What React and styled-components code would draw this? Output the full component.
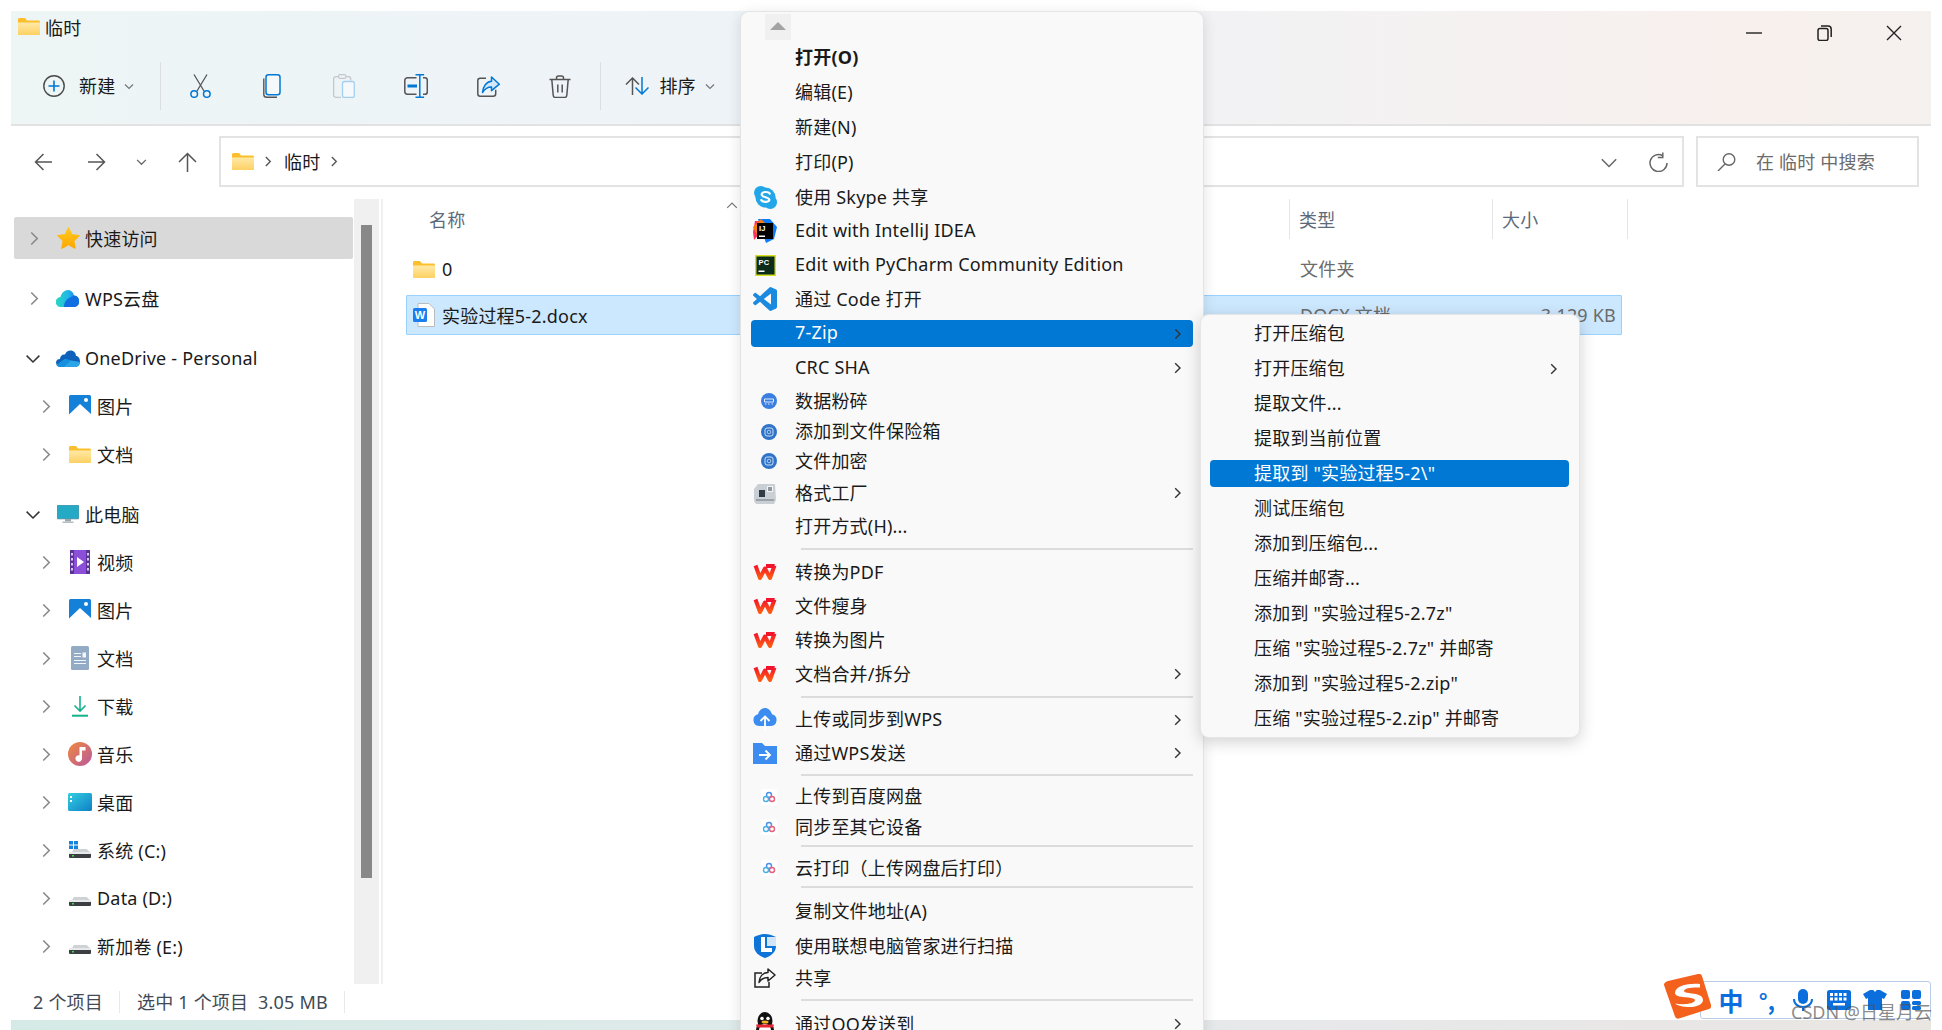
import React from 'react';
import styled, { createGlobalStyle } from 'styled-components';

const GlobalStyle = createGlobalStyle`
  html, body {
    margin: 0;
    padding: 0;
    background: #fff;
    font-family: "Noto Sans", "Noto Sans CJK SC", sans-serif;
    font-size: 18px;
    letter-spacing: 0.2px;
    color: #1a1a1a;
  }
  * { box-sizing: border-box; }
`;

const Page = styled.div`
  position: relative;
  width: 1942px;
  height: 1030px;
  overflow: hidden;
  background: #fff;
  padding: 11px 0 0 11px;
`;

const Win = styled.div`
  width: 1920px;
  height: 1019px;
  display: flex;
  flex-direction: column;
`;

const Header = styled.div`
  height: 115px;
  flex: none;
  border-bottom: 2px solid #e2e2e2;
  background: linear-gradient(90deg, #edf5f5 0%, #eef3f8 40%, #f3f2f3 68%, #f8f0ed 90%, #f5f1ee 100%);
`;

const TitleRow = styled.div`
  height: 40px;
  display: flex;
  align-items: flex-start;
  padding: 7px 2px 0 7px;
`;

const TitleText = styled.div`
  margin-left: 5px;
  line-height: 20px;
`;

const WinControls = styled.div`
  margin-left: auto;
  display: flex;
`;

const WinButton = styled.div`
  width: 70px;
  height: 30px;
  display: flex;
  align-items: center;
  justify-content: center;
`;

const Toolbar = styled.div`
  height: 70px;
  display: flex;
  align-items: center;
  padding-left: 32px;
`;

const ToolLabel = styled.span`
  margin-left: ${p => p.$ml}px;
  padding-bottom: 2px;
  white-space: nowrap;
`;

const TinyDown = styled.span`
  margin-left: ${p => p.$ml}px;
  display: flex;
`;

const ToolDivider = styled.div`
  width: 1px;
  height: 48px;
  background: #dcdfe2;
  margin-left: ${p => p.$ml}px;
  margin-right: ${p => p.$mr}px;
`;

const ToolButton = styled.div`
  width: 72px;
  height: 48px;
  display: flex;
  align-items: center;
  justify-content: center;
`;

const SortIcon = styled.span`
  margin-left: 24px;
  display: flex;
`;

const NavRow = styled.div`
  height: 73px;
  flex: none;
  padding-top: 10px;
  display: flex;
  align-items: flex-start;
  padding-left: 5px;
`;

const NavButton = styled.div`
  width: ${p => p.$w}px;
  margin-left: ${p => p.$ml || 0}px;
  height: 51px;
  display: flex;
  align-items: center;
  justify-content: center;
`;

const AddressBox = styled.div`
  width: 1465px;
  height: 51px;
  margin-left: 5px;
  border: 2px solid #e3e3e3;
  display: flex;
  align-items: center;
  padding: 0 14px 0 11px;
`;

const Crumb = styled.span`
  margin-left: ${p => p.$ml}px;
  padding-bottom: ${p => p.$pb || 0}px;
  display: flex;
`;

const AddressEnd = styled.div`
  margin-left: auto;
  display: flex;
  align-items: center;
  gap: 31px;
`;

const SearchBox = styled.div`
  width: 223px;
  height: 51px;
  margin-left: 12px;
  border: 2px solid #e3e3e3;
  display: flex;
  align-items: center;
  padding-left: 19px;
  color: #6b6b6b;
`;

const SearchText = styled.span`
  margin-left: 20px;
  padding-bottom: 1px;
  white-space: pre;
`;

const Content = styled.div`
  height: 785px;
  flex: none;
  display: flex;
`;

const Sidebar = styled.div`
  width: 343px;
  flex: none;
  padding: 18px 0 0 3px;
`;

const Group = styled.div`
  display: flex;
  flex-direction: column;
  gap: 6px;
  margin-bottom: 18px;
`;

const TreeRow = styled.div`
  height: 42px;
  width: 339px;
  display: flex;
  align-items: center;
  border-radius: 2px;
  padding-left: ${p => (p.$child ? 23 : 11)}px;
  background: ${p => (p.$selected ? '#d9d9d9' : 'transparent')};
`;

const TreeArrow = styled.span`
  width: 16px;
  display: flex;
  justify-content: center;
  flex: none;
`;

const TreeIcon = styled.span`
  display: flex;
  justify-content: center;
  flex: none;
  width: 24px;
  margin-left: 15px;
  margin-right: 5px;
`;

const TreeLabel = styled.span`
  padding-bottom: 1px;
`;

const ScrollTrack = styled.div`
  width: 25px;
  flex: none;
  background: #f0f0f0;
  padding: 26px 7px 0;
`;

const ScrollThumb = styled.div`
  height: 653px;
  background: #888;
`;

const ListPane = styled.div`
  margin-left: 2px;
  border-left: 2px solid #f0f0f0;
  flex: 1;
`;

const ColumnHead = styled.div`
  height: 40px;
  display: flex;
  color: #5c6b7a;
`;

const HeadCell = styled.div`
  width: ${p => p.$w}px;
  padding-left: ${p => p.$pl}px;
  border-right: 1px solid #e5e5e5;
  display: flex;
  align-items: center;
`;

const SortCaret = styled.span`
  align-self: flex-start;
  margin: 0 0 0 261px;
  display: flex;
  padding-top: 1px;
`;

const FileRow = styled.div`
  width: 1216px;
  height: 40px;
  margin-left: 23px;
  margin-top: ${p => p.$mt}px;
  display: grid;
  grid-template-columns: 884px 203px 1fr;
  align-items: center;
  border: 1px solid ${p => (p.$selected ? '#99d1ff' : 'transparent')};
  border-radius: 1px;
  background: ${p => (p.$selected ? '#cce8ff' : 'transparent')};
`;

const FileName = styled.div`
  display: flex;
  align-items: center;
  padding-left: 6px;
`;

const FileNameText = styled.span`
  margin-left: 7px;
`;

const FileMeta = styled.div`
  color: #6b6b6b;
  padding: 0 0 2px 9px;
`;

const FileSize = styled.div`
  color: #6b6b6b;
  text-align: right;
  padding-right: 5px;
`;

const StatusBar = styled.div`
  height: 36px;
  flex: none;
  display: flex;
  align-items: center;
  padding-left: 22px;
  font-size: 18px;
  color: #3f4a55;
`;

const StatusText = styled.span`
  white-space: pre;
  padding-bottom: 2px;
`;

const StatusDivider = styled.span`
  width: 1px;
  height: 22px;
  background: #e8e8e8;
  margin: 0 ${p => p.$mr}px 0 ${p => p.$ml}px;
`;

const BottomStrip = styled.div`
  height: 10px;
  flex: none;
  background: linear-gradient(90deg, #d5eae6 0%, #dfeaea 40%, #e8e8ea 70%, #e9e6e2 100%);
`;

const Menu = styled.div`
  position: absolute;
  left: 740px;
  top: 11px;
  width: 464px;
  height: 1040px;
  background: #f9f9f9;
  border: 1px solid #e4e4e4;
  border-radius: 9px;
  box-shadow: 0 3px 14px rgba(0, 0, 0, 0.12);
  padding: 2px 10px 0;
`;

const ScrollUp = styled.div`
  width: 26px;
  height: 26px;
  margin-left: 14px;
  background: #f0f0f0;
  display: flex;
  align-items: center;
  justify-content: center;
`;

const UpTriangle = styled.span`
  width: 0;
  height: 0;
  border-left: 8px solid transparent;
  border-right: 8px solid transparent;
  border-bottom: 8px solid #a3a3a3;
  margin-top: -3px;
`;

const MenuRow = styled.div`
  height: ${p => p.$h || 35}px;
  display: flex;
  align-items: center;
`;

const MenuRowInner = styled.div`
  flex: 1;
  height: 27px;
  display: flex;
  align-items: center;
  border-radius: 4px;
  padding-right: 10px;
  background: ${p => (p.$active ? '#0078d4' : 'transparent')};
`;

const MenuIconSlot = styled.span`
  width: 28px;
  margin-right: 16px;
  flex: none;
  display: flex;
  justify-content: center;
  align-items: center;
  padding-left: ${p => p.$shift || 0}px;
`;

const MenuLabel = styled.span`
  white-space: pre;
  padding-bottom: 3px;
  font-weight: ${p => (p.$bold ? 700 : 400)};
  color: ${p => (p.$active ? '#fff' : '#1a1a1a')};
`;

const MenuArrow = styled.span`
  margin-left: auto;
  display: flex;
`;

const MenuSep = styled.div`
  height: 2px;
  background: #dcdcdc;
  margin: ${p => p.$top}px 0 ${p => p.$bottom}px 50px;
`;

const SubMenu = styled.div`
  position: absolute;
  left: 1200px;
  top: 314px;
  width: 380px;
  height: 424px;
  background: #f9f9f9;
  border: 1px solid #e6e6e6;
  border-radius: 9px;
  box-shadow: 0 4px 16px rgba(0, 0, 0, 0.18);
  padding: 1px 10px 0 9px;
`;

const SubLabelSlot = styled.span`
  width: 44px;
  flex: none;
`;

const ImeDock = styled.div`
  position: absolute;
  left: 1664px;
  top: 974px;
  display: flex;
  align-items: flex-start;
`;

const ImeBar = styled.div`
  width: 231px;
  height: 38px;
  margin: 7px 0 0 -11px;
  background: #fff;
  border: 1px solid #b9cde8;
  border-radius: 3px;
  display: flex;
  align-items: center;
  padding-left: 12px;
`;

const ImeLogo = styled.span`
  position: relative;
  z-index: 1;
  display: flex;
`;

const ImeSlot = styled.span`
  width: 36px;
  display: flex;
  justify-content: center;
  align-items: center;
  color: #0a6fdc;
  font-size: ${p => p.$size || 22}px;
  font-weight: 700;
  line-height: 1;
  font-family: "Noto Sans CJK SC", sans-serif;
`;

const Watermark = styled.div`
  position: absolute;
  left: 1791px;
  top: 1000px;
  color: rgba(80, 80, 80, 0.68);
  font-size: 18px;
  line-height: 24px;
  white-space: pre;
  letter-spacing: 0;
`;

/* ---- small drawings ---- */

const FolderIcon = ({ w = 22, h = 17 }) => (
  <svg width={w} height={h} viewBox="0 0 22 17">
    <defs>
      <linearGradient id="fld" x1="0" y1="0" x2="0" y2="1">
        <stop offset="0" stopColor="#ffe9a6" />
        <stop offset="1" stopColor="#fdd163" />
      </linearGradient>
    </defs>
    <path d="M0 1.500C0 .7.700 0 1.500 0H7l2 2.500h11.500c.8 0 1.500.7 1.500 1.500v11.500c0 .8-.7 1.500-1.500 1.500h-19C.7 17 0 16.300 0 15.500z" fill="#fbbf2d" />
    <path d="M0 4.500h22v11c0 .8-.7 1.500-1.500 1.500h-19C.7 17 0 16.300 0 15.500z" fill="url(#fld)" />
  </svg>
);

const Chevron = ({ dir = 'right', size = 10, color = '#777', sw = 1.5 }) => {
  const d = {
    right: 'M3.5 1 L7.5 5 L3.5 9',
    down: 'M1 3.5 L5 7.5 L9 3.5',
    up: 'M1 6.5 L5 2.5 L9 6.5',
  }[dir];
  return (
    <svg width={size} height={size} viewBox="0 0 10 10">
      <path d={d} fill="none" stroke={color} strokeWidth={sw * (10 / size)} />
    </svg>
  );
};

const TreeChevron = ({ open }) =>
  open ? <Chevron dir="down" size={16} color="#333" sw={1.5} /> : <Chevron size={15} color="#8a8a8a" sw={1.6} />;

const Minimize = () => (
  <svg width="16" height="16" viewBox="0 0 16 16"><path d="M0 8h16" stroke="#222" strokeWidth="1.4" /></svg>
);
const Restore = () => (
  <svg width="15" height="16" viewBox="0 0 15 16" fill="none" stroke="#222" strokeWidth="1.500">
    <rect x="1" y="3.500" width="10" height="12" rx="2" />
    <path d="M4 1h7c1.800 0 3.200 1.400 3.200 3.200V12" />
  </svg>
);
const CloseX = () => (
  <svg width="16" height="16" viewBox="0 0 16 16"><path d="M1 1l14 14M15 1L1 15" stroke="#222" strokeWidth="1.4" /></svg>
);

const NewIcon = () => (
  <svg width="22" height="22" viewBox="0 0 22 22" fill="none">
    <circle cx="11" cy="11" r="10.200" stroke="#4a4a4a" strokeWidth="1.400" />
    <path d="M11 5.500v11M5.500 11h11" stroke="#0078d4" strokeWidth="1.600" />
  </svg>
);
const CutIcon = () => (
  <svg width="21" height="24" viewBox="0 0 21 24" fill="none">
    <path d="M4 .5l10 16.500M17 .5L7 17" stroke="#555" strokeWidth="1.300" />
    <circle cx="4.200" cy="20" r="3.300" stroke="#0078d4" strokeWidth="1.500" />
    <circle cx="16.800" cy="20" r="3.300" stroke="#0078d4" strokeWidth="1.500" />
  </svg>
);
const CopyIcon = () => (
  <svg width="18" height="24" viewBox="0 0 18 24" fill="none">
    <path d="M.8 4.500V20.500c0 1.700 1.300 2.800 3 2.800H14" stroke="#555" strokeWidth="1.400" />
    <rect x="3" y=".8" width="14" height="20" rx="2.500" fill="#f6f9fc" stroke="#0078d4" strokeWidth="1.500" />
  </svg>
);
const PasteIcon = () => (
  <svg width="22" height="24" viewBox="0 0 22 24" fill="none">
    <path d="M8 23.300H3c-1.400 0-2.400-1-2.400-2.500V5c0-1.400 1-2.400 2.400-2.400h12.500c1.300 0 2.200 1 2.200 2.400v1.500" stroke="#c4c8cb" strokeWidth="1.300" />
    <rect x="5.500" y=".7" width="7.500" height="3.600" rx="1.500" fill="#eef3f8" stroke="#c4c8cb" strokeWidth="1.200" />
    <rect x="9.500" y="7.500" width="11.800" height="16" rx="2" fill="#f6f9fc" stroke="#a4d0ef" strokeWidth="1.300" />
  </svg>
);
const RenameIcon = () => (
  <svg width="24" height="24" viewBox="0 0 24 24" fill="none">
    <path d="M12.500 3.700H3.500C2 3.700.8 4.900.8 6.400v11.200c0 1.500 1.200 2.700 2.700 2.700h9M19 3.700h2c1.300 0 2.300 1.200 2.300 2.700v11.200c0 1.500-1 2.700-2.300 2.700h-2" stroke="#555" strokeWidth="1.500" />
    <path d="M15.800 .8v22.400M11.500 .8h8.600M11.500 23.200h8.600" stroke="#0078d4" strokeWidth="1.500" />
    <path d="M3.500 12h9.500" stroke="#0078d4" strokeWidth="3" />
  </svg>
);
const ShareIcon = () => (
  <svg width="23" height="21" viewBox="0 0 23 21" fill="none">
    <path d="M9 2.200H3.200C1.800 2.200.8 3.200.8 4.700v13c0 1.500 1 2.500 2.400 2.500h13c1.500 0 2.500-1 2.500-2.500v-4" stroke="#555" strokeWidth="1.500" />
    <path d="M14.500 1l7.800 7.200-7.800 6.500v-3.600C11 11 8 12.800 5.500 16.500 6 10.500 9.500 5.500 14.500 5.200z" fill="#d3e8fa" stroke="#0078d4" strokeWidth="1.500" strokeLinejoin="round" />
  </svg>
);
const TrashIcon = () => (
  <svg width="22" height="23" viewBox="0 0 22 23" fill="none" stroke="#555" strokeWidth="1.500">
    <path d="M.5 4.500h21M7.500 4.500V3c0-1.200 .8-2 2-2h3c1.200 0 2 .8 2 2v1.500" />
    <path d="M2.800 4.500l1.400 15.800c.1 1.500 1 2.200 2.300 2.200h9c1.300 0 2.200-.7 2.300-2.200l1.400-15.800" />
    <path d="M8.800 9.500v8M13.200 9.500v8" />
  </svg>
);
const SortArrows = () => (
  <svg width="24" height="18" viewBox="0 0 24 18" fill="none" strokeWidth="1.500">
    <path d="M7.500 18V1.200M1 7.500L7.500 1 14 7.500" stroke="#555" />
    <path d="M17 0v16.800M10.500 10.500L17 17l6.500-6.500" stroke="#0078d4" />
  </svg>
);
const NavArrow = ({ dir }) => {
  const props = {
    left: { w: 18, h: 18, d: 'M18 9H1.500M9.500 1L1.500 9l8 8' },
    right: { w: 18, h: 18, d: 'M0 9h16.500M8.500 1l8 8-8 8' },
    up: { w: 19, h: 20, d: 'M9.500 20V1.500M1 10l8.500-8.500L18 10' },
  }[dir];
  return (
    <svg width={props.w} height={props.h} viewBox={`0 0 ${props.w} ${props.h}`} fill="none">
      <path d={props.d} stroke="#555" strokeWidth="1.500" />
    </svg>
  );
};
const Refresh = () => (
  <svg width="19" height="20" viewBox="0 0 19 20" fill="none" stroke="#666" strokeWidth="1.500">
    <path d="M13.500 3.500A8.500 8.500 0 1 0 18 11" />
    <path d="M13.800 .5v5h-5" />
  </svg>
);
const SearchGlass = () => (
  <svg width="19" height="18" viewBox="0 0 19 18" fill="none" stroke="#666" strokeWidth="1.400">
    <circle cx="12" cy="6.500" r="5.800" />
    <path d="M8 11L1 18" />
  </svg>
);
const StarIcon = () => (
  <svg width="23" height="22" viewBox="0 0 24 23">
    <defs>
      <linearGradient id="star" x1="0" y1="0" x2="0" y2="1">
        <stop offset="0" stopColor="#ffc91f" />
        <stop offset="1" stopColor="#fda800" />
      </linearGradient>
    </defs>
    <path d="M12 1l3.300 7 7.700 1-5.600 5.300L18.800 22 12 18.200 5.200 22l1.400-7.700L1 9l7.700-1z" fill="url(#star)" stroke="url(#star)" strokeWidth="1.500" strokeLinejoin="round" />
  </svg>
);
const WpsCloud = () => (
  <svg width="24" height="17" viewBox="0 0 24 17">
    <defs>
      <linearGradient id="wpc" x1="0" y1="0" x2="1" y2="0">
        <stop offset="0" stopColor="#28d8c0" />
        <stop offset="0.55" stopColor="#22b4ea" />
        <stop offset="1" stopColor="#0e70e0" />
      </linearGradient>
    </defs>
    <path d="M5 17a5 5 0 0 1-.6-10C5.400 3 8.500 0 12 0c3 0 5.500 2.500 6 5.500A5.800 5.800 0 0 1 18 17z" fill="url(#wpc)" />
    <path d="M8 17c0-5 3-8.500 7-10 2-.8 3-1.500 3-1.500A5.800 5.800 0 0 1 18 17z" fill="#0f6fe0" />
  </svg>
);
const OneDriveIcon = () => (
  <svg width="24" height="17" viewBox="0 0 24 17">
    <path d="M4 9c0-3 2.500-5 5-4.500C10 2 12 .5 14.500 .5 18 .5 20 3 20 6c2.500 0 4 2.500 4 5.500C24 14.500 22 17 19 17H5c-3 0-5-2-5-4.500S2 9 4 9z" fill="#0e62bb" />
    <path d="M.5 15L9 9l6 1.500 9 1.500c0 3-2 5-5 5H5c-2 0-3.500-1-4.500-2z" fill="#2aa5e8" />
    <path d="M9 9l6 1.500-7 6.500H5c-2 0-3.500-1-4.500-2z" fill="#1490df" />
  </svg>
);
const PicturesIcon = () => (
  <svg width="22" height="22" viewBox="0 0 22 22">
    <rect width="22" height="22" rx="1.500" fill="#1580d8" />
    <path d="M0 19.500L11 9l11 10v3H0z" fill="#fff" />
    <circle cx="17" cy="5" r="2" fill="#fff" />
  </svg>
);
const MonitorIcon = () => (
  <svg width="22" height="18" viewBox="0 0 22 18">
    <rect width="22" height="14" rx="1" fill="#25aac6" stroke="#7d8c94" strokeWidth=".6" />
    <path d="M8 14h6v2.500H8z" fill="#9aa6ad" />
    <path d="M5.500 16.500h11V18h-11z" fill="#b6bec3" />
  </svg>
);
const VideoIcon = () => (
  <svg width="20" height="24" viewBox="0 0 20 24">
    <rect width="20" height="24" rx="1.500" fill="#8c4fd8" />
    <path d="M0 0h4v24H0zM16 0h4v24h-4z" fill="#5a3396" />
    <path d="M1 3h2v2.500H1zM1 8h2v2.500H1zM1 13h2v2.500H1zM1 18h2v2.500H1zM17 3h2v2.500h-2zM17 8h2v2.500h-2zM17 13h2v2.500h-2zM17 18h2v2.500h-2z" fill="#d9c3f4" />
    <path d="M7 7l7 5-7 5z" fill="#fff" />
  </svg>
);
const DocsIcon = () => (
  <svg width="18" height="24" viewBox="0 0 18 24">
    <rect width="18" height="24" rx="1.500" fill="#94abc6" />
    <path d="M3 7h7v1H3zM3 10h7v1H3zM3 14h12v1H3zM3 17h12v1H3z" fill="#f3f6f9" />
    <path d="M11.500 6.500h3.500v5h-3.500z" fill="#f3f6f9" />
  </svg>
);
const DownloadIcon = () => (
  <svg width="16" height="21" viewBox="0 0 16 21" fill="none" stroke="#16b18c" strokeWidth="1.600">
    <path d="M8 0v15M2.500 9.500L8 15l5.500-5.500" />
    <path d="M0 19.700h16" strokeWidth="2" />
  </svg>
);
const MusicIcon = () => (
  <svg width="24" height="24" viewBox="0 0 24 24">
    <defs>
      <linearGradient id="mus" x1="0" y1="0" x2="1" y2="1">
        <stop offset="0" stopColor="#f08a3c" />
        <stop offset="1" stopColor="#b9579e" />
      </linearGradient>
    </defs>
    <circle cx="12" cy="12" r="12" fill="url(#mus)" />
    <path d="M11.500 5h6v3.500h-3.500v8a3.300 3.300 0 1 1-2.500-3.200z" fill="#fff" />
  </svg>
);
const DesktopIcon = () => (
  <svg width="24" height="18" viewBox="0 0 24 18">
    <defs>
      <linearGradient id="dsk" x1="0" y1="0" x2="1" y2="1">
        <stop offset="0" stopColor="#33cfe0" />
        <stop offset="1" stopColor="#0f7fc6" />
      </linearGradient>
    </defs>
    <rect width="24" height="18" rx="1.500" fill="url(#dsk)" />
    <path d="M2 3h2v2H2zM2 7h2v2H2z" fill="#fff" />
  </svg>
);
const DriveIcon = ({ win }) => (
  <svg width="22" height="18" viewBox="0 0 22 18">
    {win && <path d="M0 0h4v3.500H0zM5 0h4v3.500H5zM0 4.500h4V8H0zM5 4.500h4V8H5z" fill="#1583dc" />}
    <path d="M3 11l2-3h12.500L21 11z" fill="#cfd2d4" />
    <rect y="11" width="22" height="6" rx="1" fill="#3b3f42" />
    <rect y="11" width="22" height="2" fill="#e8e9ea" />
    <rect x="3" y="14" width="2" height="1.500" fill="#3ede4a" />
  </svg>
);
const WordIcon = () => (
  <svg width="22" height="24" viewBox="0 0 22 24">
    <path d="M5 .5h11l5.500 5.500v17.500H5z" fill="#fff" stroke="#b8bcc0" />
    <rect y="5" width="14" height="14" rx="1.500" fill="#1a7ef0" />
    <text x="7" y="16" textAnchor="middle" fontSize="11" fontWeight="700" fill="#fff" fontFamily="Liberation Sans">W</text>
  </svg>
);
const SkypeIcon = () => (
  <svg width="23" height="23" viewBox="0 0 24 24">
    <circle cx="7" cy="7" r="7" fill="#22a6e8" />
    <circle cx="17" cy="17" r="7" fill="#22a6e8" />
    <circle cx="12" cy="12" r="10.500" fill="#22a6e8" />
    <path d="M16.500 8c-1-2-7.500-2.800-8.500.5-.8 3.500 7.500 3 8 5.800.3 2.700-6 3.300-8.500.3" fill="none" stroke="#fff" strokeWidth="2.200" strokeLinecap="round" />
  </svg>
);
const IdeaIcon = () => (
  <svg width="24" height="24" viewBox="0 0 24 24">
    <path d="M2 2h10l-3 10-8 9-1-8z" fill="#fe315d" />
    <path d="M5 0h12l7 8-3 12-8 4z" fill="#087cfa" />
    <path d="M0 8L8 0l6 6-8 14z" fill="#f97a12" />
    <rect x="4" y="4" width="16" height="16" fill="#000" />
    <text x="6" y="12" fontSize="7.500" fontWeight="700" fill="#fff" fontFamily="Liberation Sans">IJ</text>
    <path d="M6 16.500h6V18H6z" fill="#fff" />
  </svg>
);
const PyCharmIcon = () => (
  <svg width="21" height="21" viewBox="0 0 21 21">
    <rect width="21" height="21" fill="#d8e021" />
    <rect x="1.500" y="1.500" width="18" height="18" fill="#0c2c1c" />
    <text x="3.500" y="9.500" fontSize="7.500" fontWeight="700" fill="#fff" fontFamily="Liberation Sans">PC</text>
    <path d="M3.500 15.500h6V17h-6z" fill="#fff" />
  </svg>
);
const VsCodeIcon = () => (
  <svg width="24" height="24" viewBox="0 0 24 24">
    <path fill="#1a8ae0" d="M23.150 2.587L18.210.21a1.494 1.494 0 0 0-1.705.29l-9.460 8.630-4.120-3.128a.999.999 0 0 0-1.276.057L.327 7.261A1 1 0 0 0 .326 8.740L3.899 12 .326 15.260a1 1 0 0 0 .001 1.479L1.650 17.940a.999.999 0 0 0 1.276.057l4.120-3.128 9.460 8.630a1.492 1.492 0 0 0 1.704.29l4.942-2.377A1.500 1.500 0 0 0 24 20.060V3.939a1.500 1.500 0 0 0-.850-1.352zm-5.146 14.861L10.826 12l7.178-5.448v10.896z" />
  </svg>
);
const ShredIcon = () => (
  <svg width="16" height="16" viewBox="0 0 16 16">
    <circle cx="8" cy="8" r="8" fill="#3a7fe0" />
    <path d="M3.500 6h9v3h-9z" fill="none" stroke="#dfeafa" strokeWidth="1" />
    <path d="M4 11h1.500M7 11h1.500M10.500 11H12" stroke="#dfeafa" />
  </svg>
);
const VaultIcon = () => (
  <svg width="16" height="16" viewBox="0 0 16 16">
    <circle cx="8" cy="8" r="8" fill="#2f74c8" />
    <rect x="4" y="4" width="8" height="8" rx="2" fill="none" stroke="#cfe0f5" />
    <circle cx="8" cy="8" r="1.800" fill="none" stroke="#cfe0f5" strokeWidth=".8" />
  </svg>
);
const FactoryIcon = () => (
  <svg width="24" height="24" viewBox="0 0 24 24">
    <path d="M1 8l4-5h17l1 16-2 4H3l-2-3z" fill="#c9cfd4" />
    <path d="M6 9h6v7H6z" fill="#2e3a44" />
    <path d="M14 5h6v6h-6z" fill="#f2f4f5" />
    <path d="M15 7h4M15 9h4" stroke="#2e3a44" />
    <path d="M3 18h18v2H3z" fill="#9aa3aa" />
  </svg>
);
const WpsW = () => (
  <svg width="24" height="18" viewBox="0 0 24 18">
    <defs>
      <linearGradient id="wps" x1="0" y1="0" x2="0" y2="1">
        <stop offset="0" stopColor="#f2142c" />
        <stop offset="1" stopColor="#ff5a12" />
      </linearGradient>
    </defs>
    <path d="M2.500 2.500L7 15l5-9.500L17 15l4.500-12.500" fill="none" stroke="url(#wps)" strokeWidth="4" strokeLinejoin="round" />
    <path d="M13 1h9l-2 4h-7z" fill="#f2142c" />
  </svg>
);
const UploadCloud = () => (
  <svg width="24" height="23" viewBox="0 0 24 23">
    <path d="M6 18a6 6 0 0 1-1-11.800C6 2.600 9 0 12 0s6 2.600 7 6.200A6 6 0 0 1 18 18z" fill="#3d8cf0" />
    <path d="M12 23V9M7.500 13L12 8.500l4.500 4.500" fill="none" stroke="#fff" strokeWidth="1.800" />
  </svg>
);
const SendFolder = () => (
  <svg width="24" height="21" viewBox="0 0 24 21">
    <path d="M0 0h9l3 3h12v18H0z" fill="#3d8cf0" />
    <path d="M6 12h11M12.500 7.500L17 12l-4.500 4.500" fill="none" stroke="#fff" strokeWidth="1.800" />
  </svg>
);
const BaiduIcon = () => (
  <svg width="16" height="16" viewBox="0 0 16 16" fill="none">
    <rect width="16" height="16" rx="2" fill="#fff" />
    <circle cx="8" cy="6" r="2.500" stroke="#4b8fe8" strokeWidth="1.400" />
    <circle cx="5" cy="10" r="2.500" stroke="#4bb0e8" strokeWidth="1.400" />
    <circle cx="11" cy="10" r="2.500" stroke="#e8607a" strokeWidth="1.400" />
  </svg>
);
const LenovoShield = () => (
  <svg width="22" height="24" viewBox="0 0 22 24">
    <path d="M11 0c3 0 7 1 11 3v9c0 6-5 10-11 12C5 22 0 18 0 12V3c4-2 8-3 11-3z" fill="#0f74d8" />
    <path d="M9 3v13h9" fill="none" stroke="#fff" strokeWidth="4" />
    <path d="M13 3h9v9h-9z" fill="#e8f2fc" opacity=".9" />
  </svg>
);
const ShareBlack = () => (
  <svg width="22" height="20" viewBox="0 0 22 20" fill="none" stroke="#222" strokeWidth="1.500">
    <path d="M8 5H1v14h14v-5" />
    <path d="M14 1l7 6-7 6V9.500C9.500 9.500 7 11 5 14.500 5.500 8.500 9 4.500 14 4.500z" strokeLinejoin="round" />
  </svg>
);
const QQIcon = () => (
  <svg width="22" height="24" viewBox="0 0 22 24">
    <ellipse cx="11" cy="9" rx="7.500" ry="9" fill="#111" />
    <ellipse cx="11" cy="18" rx="9" ry="8" fill="#111" />
    <ellipse cx="11" cy="18" rx="6" ry="6" fill="#fff" />
    <path d="M2 12.500h18l-1 3H3z" fill="#e6262e" />
    <circle cx="8" cy="6.500" r="1.800" fill="#fff" />
    <circle cx="14" cy="6.500" r="1.800" fill="#fff" />
    <ellipse cx="11" cy="10" rx="3.500" ry="1.500" fill="#f7b21f" />
  </svg>
);
const SogouLogo = () => (
  <svg width="47" height="45" viewBox="0 0 47 45">
    <path d="M4 7L34 0c2-.4 3.500.5 4 2l9 29c.5 2-.5 3.500-2 4L15 44.500c-2 .5-3.500-.5-4-2L0 11c-.4-1.800 2-3.500 4-4z" fill="#f4611d" />
    <path d="M36 10C24 9 11 12 11 19c0 6 19 3 20 7 0 4-12 5-20 3.500 5 4.500 26 6 28-3 1-9-19-6-19-9.500 0-3 9-4 16-3.500z" fill="#fff" />
  </svg>
);
const MicIcon = () => (
  <svg width="20" height="22" viewBox="0 0 20 22" fill="none">
    <rect x="5" y="0" width="10" height="15" rx="5" fill="#0a6fdc" />
    <path d="M1 10c0 5 4 8 9 8s9-3 9-8M10 18v4" stroke="#0a6fdc" strokeWidth="2" />
  </svg>
);
const KeyboardIcon = () => (
  <svg width="24" height="20" viewBox="0 0 24 20">
    <rect width="24" height="20" rx="2.500" fill="#0a6fdc" />
    <path d="M3 3h3v3H3zM7.500 3h3v3h-3zM12 3h3v3h-3zM16.500 3h3v3h-3zM3 7.500h3v3H3zM7.500 7.500h3v3h-3zM12 7.500h3v3h-3zM16.500 7.500h3v3h-3zM6 13h12v2.500H6z" fill="#fff" />
  </svg>
);
const ShirtIcon = () => (
  <svg width="24" height="20" viewBox="0 0 24 20"><path d="M7 0h3.500c.5 2 2.500 2 3 0H17l7 4-3 5-2-1v12H5V8L3 9 0 4z" fill="#0a6fdc" /></svg>
);
const GridIcon = () => (
  <svg width="20" height="20" viewBox="0 0 20 20" fill="#0a6fdc">
    <rect width="9" height="9" rx="2" />
    <rect x="11" width="9" height="9" rx="2" />
    <rect y="11" width="9" height="9" rx="2" />
    <rect x="11" y="11" width="9" height="4" rx="1.500" />
    <rect x="11" y="16" width="9" height="4" rx="1.500" />
  </svg>
);

/* ---- data ---- */

const tree = [
  [{ label: '快速访问', icon: <StarIcon />, selected: true }],
  [{ label: 'WPS云盘', icon: <WpsCloud /> }],
  [
    { label: 'OneDrive - Personal', icon: <OneDriveIcon />, open: true },
    { label: '图片', icon: <PicturesIcon />, child: true },
    { label: '文档', icon: <FolderIcon />, child: true },
  ],
  [
    { label: '此电脑', icon: <MonitorIcon />, open: true },
    { label: '视频', icon: <VideoIcon />, child: true },
    { label: '图片', icon: <PicturesIcon />, child: true },
    { label: '文档', icon: <DocsIcon />, child: true },
    { label: '下载', icon: <DownloadIcon />, child: true },
    { label: '音乐', icon: <MusicIcon />, child: true },
    { label: '桌面', icon: <DesktopIcon />, child: true },
    { label: '系统 (C:)', icon: <DriveIcon win />, child: true },
    { label: 'Data (D:)', icon: <DriveIcon />, child: true },
    { label: '新加卷 (E:)', icon: <DriveIcon />, child: true },
  ],
];

const menuItems = [
  { label: '打开(O)', bold: true },
  { label: '编辑(E)' },
  { label: '新建(N)' },
  { label: '打印(P)' },
  { label: '使用 Skype 共享', h: 34, icon: <SkypeIcon /> },
  { label: 'Edit with IntelliJ IDEA', h: 34, icon: <IdeaIcon /> },
  { label: 'Edit with PyCharm Community Edition', h: 34, icon: <PyCharmIcon /> },
  { label: '通过 Code 打开', h: 34, icon: <VsCodeIcon /> },
  { label: '7-Zip', arrow: true, active: true },
  { label: 'CRC SHA', h: 34, arrow: true },
  { label: '数据粉碎', h: 32, icon: <ShredIcon />, shift: 8 },
  { label: '添加到文件保险箱', h: 29, icon: <VaultIcon />, shift: 8 },
  { label: '文件加密', h: 30, icon: <VaultIcon />, shift: 8 },
  { label: '格式工厂', h: 34, icon: <FactoryIcon />, arrow: true },
  { label: '打开方式(H)...', h: 33 },
  { sep: [5, 5] },
  { label: '转换为PDF', h: 34, icon: <WpsW /> },
  { label: '文件瘦身', h: 34, icon: <WpsW /> },
  { label: '转换为图片', h: 34, icon: <WpsW /> },
  { label: '文档合并/拆分', h: 34, icon: <WpsW />, arrow: true },
  { sep: [5, 5] },
  { label: '上传或同步到WPS', h: 33, icon: <UploadCloud />, arrow: true },
  { label: '通过WPS发送', h: 34, icon: <SendFolder />, arrow: true },
  { sep: [4, 4] },
  { label: '上传到百度网盘', h: 33, icon: <BaiduIcon />, shift: 8 },
  { label: '同步至其它设备', h: 28, icon: <BaiduIcon />, shift: 8 },
  { sep: [4, 4] },
  { label: '云打印（上传网盘后打印）', h: 34, icon: <BaiduIcon />, shift: 8 },
  { sep: [1, 6] },
  { label: '复制文件地址(A)' },
  { label: '使用联想电脑管家进行扫描', h: 34, icon: <LenovoShield /> },
  { label: '共享', h: 30, icon: <ShareBlack /> },
  { sep: [6, 6] },
  { label: '通过QQ发送到', h: 34, icon: <QQIcon />, arrow: true },
];

const subItems = [
  { label: '打开压缩包' },
  { label: '打开压缩包', arrow: true },
  { label: '提取文件...' },
  { label: '提取到当前位置' },
  { label: '提取到 "实验过程5-2\\"', active: true },
  { label: '测试压缩包' },
  { label: '添加到压缩包...' },
  { label: '压缩并邮寄...' },
  { label: '添加到 "实验过程5-2.7z"' },
  { label: '压缩 "实验过程5-2.7z" 并邮寄' },
  { label: '添加到 "实验过程5-2.zip"' },
  { label: '压缩 "实验过程5-2.zip" 并邮寄' },
];

const App = () => (
  <Page>
    <GlobalStyle />
    <Win>
      <Header>
        <TitleRow>
          <FolderIcon />
          <TitleText>临时</TitleText>
          <WinControls>
            <WinButton><Minimize /></WinButton>
            <WinButton><Restore /></WinButton>
            <WinButton><CloseX /></WinButton>
          </WinControls>
        </TitleRow>
        <Toolbar>
          <NewIcon />
          <ToolLabel $ml={14}>新建</ToolLabel>
          <TinyDown $ml={9}><Chevron dir="down" size={10} color="#777" sw={1.2} /></TinyDown>
          <ToolDivider $ml={26} $mr={3} />
          <ToolButton><CutIcon /></ToolButton>
          <ToolButton><CopyIcon /></ToolButton>
          <ToolButton><PasteIcon /></ToolButton>
          <ToolButton><RenameIcon /></ToolButton>
          <ToolButton><ShareIcon /></ToolButton>
          <ToolButton><TrashIcon /></ToolButton>
          <ToolDivider $ml={4} $mr={0} />
          <SortIcon><SortArrows /></SortIcon>
          <ToolLabel $ml={10}>排序</ToolLabel>
          <TinyDown $ml={9}><Chevron dir="down" size={10} color="#777" sw={1.2} /></TinyDown>
        </Toolbar>
      </Header>

      <NavRow>
        <NavButton $w={54}><NavArrow dir="left" /></NavButton>
        <NavButton $w={54}><NavArrow dir="right" /></NavButton>
        <NavButton $w={34}><Chevron dir="down" size={11} color="#666" sw={1.3} /></NavButton>
        <NavButton $w={54} $ml={2}><NavArrow dir="up" /></NavButton>
        <AddressBox>
          <FolderIcon />
          <Crumb $ml={8}><Chevron size={11} color="#555" sw={1.4} /></Crumb>
          <Crumb $ml={11} $pb={2}>临时</Crumb>
          <Crumb $ml={8}><Chevron size={11} color="#555" sw={1.4} /></Crumb>
          <AddressEnd>
            <Chevron dir="down" size={18} color="#666" sw={1.5} />
            <Refresh />
          </AddressEnd>
        </AddressBox>
        <SearchBox>
          <SearchGlass />
          <SearchText>在 临时 中搜索</SearchText>
        </SearchBox>
      </NavRow>

      <Content>
        <Sidebar>
          {tree.map((group, g) => (
            <Group key={g}>
              {group.map((item, i) => (
                <TreeRow key={i} $child={item.child} $selected={item.selected}>
                  <TreeArrow><TreeChevron open={item.open} /></TreeArrow>
                  <TreeIcon>{item.icon}</TreeIcon>
                  <TreeLabel>{item.label}</TreeLabel>
                </TreeRow>
              ))}
            </Group>
          ))}
        </Sidebar>
        <ScrollTrack><ScrollThumb /></ScrollTrack>
        <ListPane>
          <ColumnHead>
            <HeadCell $w={907} $pl={46}>
              名称
              <SortCaret><Chevron dir="up" size={12} color="#777" sw={1.2} /></SortCaret>
            </HeadCell>
            <HeadCell $w={203} $pl={9}>类型</HeadCell>
            <HeadCell $w={135} $pl={9}>大小</HeadCell>
          </ColumnHead>
          <FileRow $mt={10}>
            <FileName><FolderIcon /><FileNameText>0</FileNameText></FileName>
            <FileMeta>文件夹</FileMeta>
            <FileSize />
          </FileRow>
          <FileRow $mt={6} $selected>
            <FileName><WordIcon /><FileNameText>实验过程5-2.docx</FileNameText></FileName>
            <FileMeta>DOCX 文档</FileMeta>
            <FileSize>3,129 KB</FileSize>
          </FileRow>
        </ListPane>
      </Content>

      <StatusBar>
        <StatusText>2 个项目</StatusText>
        <StatusDivider $ml={16} $mr={17} />
        <StatusText>选中 1 个项目  3.05 MB</StatusText>
        <StatusDivider $ml={16} $mr={0} />
      </StatusBar>
      <BottomStrip />
    </Win>

    <Menu>
      <ScrollUp><UpTriangle /></ScrollUp>
      {menuItems.map((item, i) =>
        item.sep ? (
          <MenuSep key={i} $top={item.sep[0]} $bottom={item.sep[1]} />
        ) : (
          <MenuRow key={i} $h={item.h}>
            <MenuRowInner $active={item.active}>
              <MenuIconSlot $shift={item.shift}>{item.icon}</MenuIconSlot>
              <MenuLabel $bold={item.bold} $active={item.active}>{item.label}</MenuLabel>
              {item.arrow && <MenuArrow><Chevron size={12} color="#333" sw={1.4} /></MenuArrow>}
            </MenuRowInner>
          </MenuRow>
        )
      )}
    </Menu>

    <SubMenu>
      {subItems.map((item, i) => (
        <MenuRow key={i}>
          <MenuRowInner $active={item.active}>
            <SubLabelSlot />
            <MenuLabel $active={item.active}>{item.label}</MenuLabel>
            {item.arrow && <MenuArrow><Chevron size={12} color="#333" sw={1.4} /></MenuArrow>}
          </MenuRowInner>
        </MenuRow>
      ))}
    </SubMenu>

    <ImeDock>
      <ImeLogo><SogouLogo /></ImeLogo>
      <ImeBar>
        <ImeSlot $size={25}>中</ImeSlot>
        <ImeSlot $size={22}>°,</ImeSlot>
        <ImeSlot><MicIcon /></ImeSlot>
        <ImeSlot><KeyboardIcon /></ImeSlot>
        <ImeSlot><ShirtIcon /></ImeSlot>
        <ImeSlot><GridIcon /></ImeSlot>
      </ImeBar>
    </ImeDock>
    <Watermark>CSDN @日星月云</Watermark>
  </Page>
);

export default App;
